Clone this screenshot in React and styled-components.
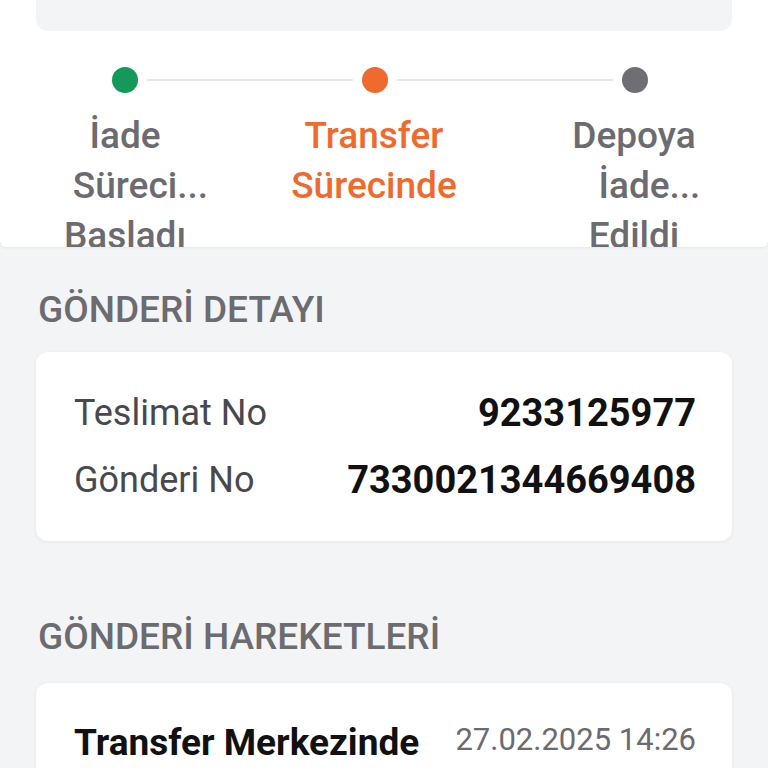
import React from "react";
import styled, { createGlobalStyle } from "styled-components";

const GlobalStyle = createGlobalStyle`
	html, body {
		margin: 0;
		padding: 0;
		background: #f3f4f6;
		font-family: Roboto, "Noto Sans", sans-serif;
		-webkit-font-smoothing: antialiased;
	}
`;

const Page = styled.div`
	width: 768px;
	height: 768px;
	background: #f3f4f6;
	overflow: hidden;
`;

const TopCard = styled.div`
	background: #ffffff;
	height: 247px;
	overflow: hidden;
	border-radius: 0 0 6px 6px;
	box-shadow: 0 1px 3px rgba(0, 0, 0, 0.06);
`;

const HeaderStub = styled.div`
	margin: 0 36px;
	height: 31px;
	background: #f3f4f6;
	border-radius: 0 0 12px 12px;
`;

const DotRow = styled.div`
	display: flex;
	align-items: center;
	padding-left: 112px;
	margin-top: 36px;
	height: 26px;
`;

const Dot = styled.div`
	width: 26px;
	height: 26px;
	border-radius: 50%;
	background: ${(p) => p.color};
	flex-shrink: 0;
`;

const Connector = styled.div`
	width: ${(p) => p.width}px;
	height: 2px;
	margin: 0 9px;
	background: #e6e6e8;
`;

const LabelRow = styled.div`
	display: grid;
	grid-template-columns: 178px 320px 200px;
	padding-left: 36px;
	margin-top: 18px;
`;

const StepLabel = styled.div`
	display: flex;
	flex-direction: column;
	align-items: center;
	font-size: 37px;
	line-height: 50px;
	font-weight: 500;
	color: ${(p) => (p.active ? "#ee6a2d" : "#6b6b70")};
`;

const Word = styled.span`
	position: relative;
	white-space: nowrap;

	&::after {
		content: "${(p) => (p.trail ? "..." : "")}";
		position: absolute;
		left: 100%;
		top: 0;
	}
`;

const SectionTitle = styled.h2`
	margin: 0;
	padding: 0 38px;
	font-size: 37px;
	line-height: 40px;
	font-weight: 500;
	color: #6b6b70;
	margin-top: ${(p) => p.top}px;
	margin-bottom: ${(p) => p.bottom}px;
`;

const Card = styled.div`
	margin: 0 36px;
	background: #ffffff;
	border-radius: 12px;
	box-shadow: 0 1px 4px rgba(0, 0, 0, 0.06);
	padding: ${(p) => p.pad};
	display: flex;
	flex-direction: column;
	gap: ${(p) => p.gap || 0}px;
`;

const Row = styled.div`
	display: flex;
	justify-content: space-between;
	align-items: ${(p) => p.align || "center"};
	line-height: 50px;
`;

const Label = styled.span`
	font-size: 36px;
	color: #48484d;
`;

const Value = styled.span`
	font-size: 38px;
	font-weight: 700;
	color: #111111;
`;

const EventTitle = styled.span`
	font-size: 37px;
	font-weight: 700;
	color: #111111;
`;

const EventDate = styled.span`
	font-size: 31px;
	color: #6b6b70;
	line-height: 44px;
`;

const steps = [
	{ lines: [["İade"], ["Süreci", true], ["Basladı"]], color: "#13995a" },
	{ lines: [["Transfer"], ["Sürecinde"]], color: "#ee6a2d", active: true },
	{ lines: [["Depoya"], ["İade", true], ["Edildi"]], color: "#6e6e73" },
];

export default function App() {
	return (
		<Page>
			<GlobalStyle />
			<TopCard>
				<HeaderStub />
				<DotRow>
					<Dot color={steps[0].color} />
					<Connector width={206} />
					<Dot color={steps[1].color} />
					<Connector width={216} />
					<Dot color={steps[2].color} />
				</DotRow>
				<LabelRow>
					{steps.map((s, i) => (
						<StepLabel key={i} active={s.active}>
							{s.lines.map(([w, trail], j) => (
								<Word key={j} trail={trail}>
									{w}
								</Word>
							))}
						</StepLabel>
					))}
				</LabelRow>
			</TopCard>

			<SectionTitle top={43} bottom={22}>
				GÖNDERİ DETAYI
			</SectionTitle>
			<Card pad="36px 36px 36px 38px" gap={17}>
				<Row>
					<Label>Teslimat No</Label>
					<Value>9233125977</Value>
				</Row>
				<Row>
					<Label>Gönderi No</Label>
					<Value>7330021344669408</Value>
				</Row>
			</Card>

			<SectionTitle top={76} bottom={26}>
				GÖNDERİ HAREKETLERİ
			</SectionTitle>
			<Card pad="35px 36px 36px 38px">
				<Row align="flex-start">
					<EventTitle>Transfer Merkezinde</EventTitle>
					<EventDate>27.02.2025 14:26</EventDate>
				</Row>
			</Card>
		</Page>
	);
}
